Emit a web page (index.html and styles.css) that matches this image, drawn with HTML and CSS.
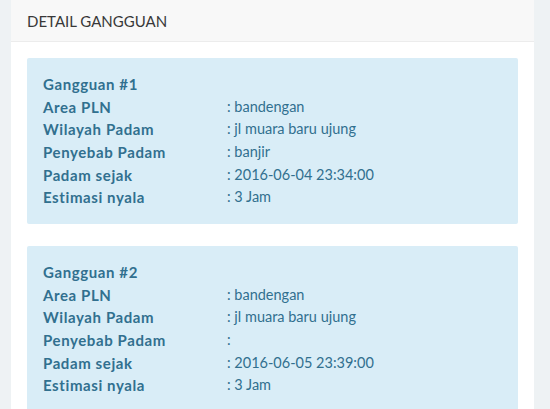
FILE: index.html
```html
<!DOCTYPE html>
<html>
<head>
<meta charset="utf-8">
<link rel="stylesheet" href="styles.css">
</head>
<body>
<div class="page">
  <div class="panel">
    <div class="panel-heading">DETAIL GANGGUAN</div>
    <div class="panel-body">
      <div class="alert">
        <div class="title">Gangguan #1</div>
        <div class="row"><span class="label">Area PLN</span><span class="value">: bandengan</span></div>
        <div class="row"><span class="label">Wilayah Padam</span><span class="value">: jl muara baru ujung</span></div>
        <div class="row"><span class="label">Penyebab Padam</span><span class="value">: banjir</span></div>
        <div class="row"><span class="label">Padam sejak</span><span class="value">: 2016-06-04 23:34:00</span></div>
        <div class="row"><span class="label">Estimasi nyala</span><span class="value">: 3 Jam</span></div>
      </div>
      <div class="alert">
        <div class="title">Gangguan #2</div>
        <div class="row"><span class="label">Area PLN</span><span class="value">: bandengan</span></div>
        <div class="row"><span class="label">Wilayah Padam</span><span class="value">: jl muara baru ujung</span></div>
        <div class="row"><span class="label">Penyebab Padam</span><span class="value">:</span></div>
        <div class="row"><span class="label">Padam sejak</span><span class="value">: 2016-06-05 23:39:00</span></div>
        <div class="row"><span class="label">Estimasi nyala</span><span class="value">: 3 Jam</span></div>
      </div>
    </div>
  </div>
</div>
</body>
</html>
```
FILE: styles.css
```css
html, body {
  margin: 0;
  padding: 0;
  background: #eef2f4;
  font-family: Lato, "Open Sans", sans-serif;
}
.page {
  padding: 0 16px 0 11px;
}
.panel {
  background: #fff;
  height: 409px;
  overflow: hidden;
}
.panel-heading {
  background: #f8f8f8;
  border-bottom: 1px solid #ececec;
  height: 41px;
  line-height: 43px;
  padding-left: 16px;
  font-size: 15px;
  color: #383838;
}
.panel-body {
  padding: 16px 16px 0 16px;
}
.alert {
  background: #d9edf7;
  color: #31708f;
  padding: 15px 16px;
  margin-bottom: 22px;
  font-size: 14.5px;
  line-height: 22.67px;
  border-radius: 2px;
}
.title, .label {
  font-weight: bold;
  font-size: 15px;
  letter-spacing: 0.6px;
}
.row {
  display: flex;
}
.label {
  width: 184px;
  flex: none;
}
```
